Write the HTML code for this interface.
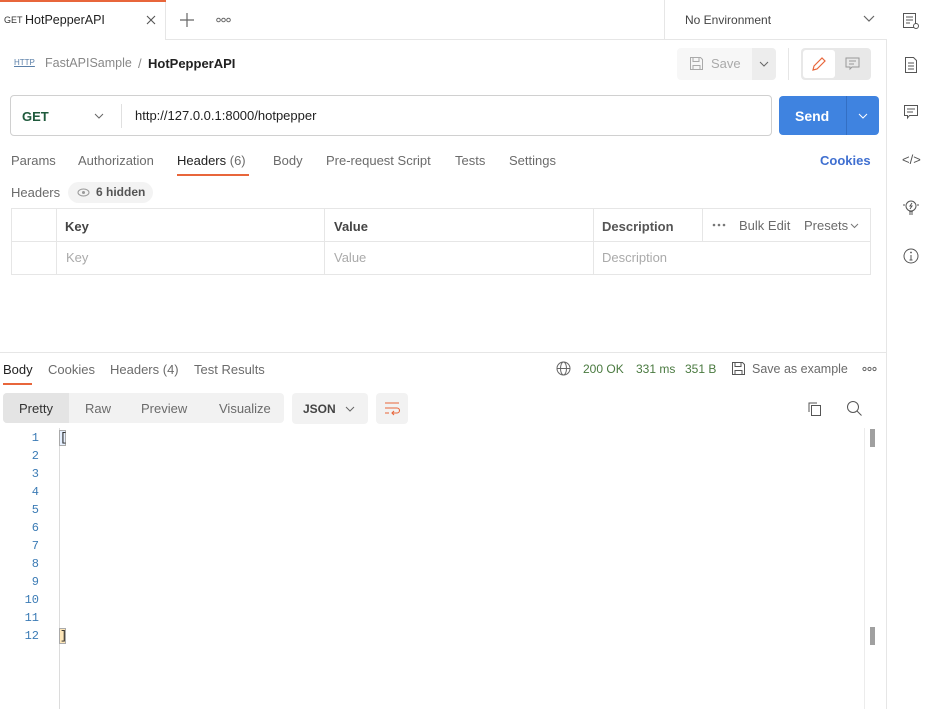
<!DOCTYPE html>
<html><head><meta charset="utf-8"><style>
*{box-sizing:border-box;margin:0;padding:0}
body{width:931px;height:709px;overflow:hidden;background:#fff;font-family:"Liberation Sans",sans-serif;font-size:13px;color:#212121;position:relative}
.a{position:absolute;white-space:nowrap}
.g{color:#6b6b6b}
svg{position:absolute}
</style></head><body>
<!-- top bar -->
<div class="a" style="left:0;top:39px;width:886px;height:1px;background:#e6e6e6"></div>
<div class="a" style="left:165px;top:0;width:1px;height:39px;background:#e6e6e6"></div>
<div class="a" style="left:0;top:0;width:165px;height:40px;background:#fff"></div>
<div class="a" style="left:0;top:0;width:166px;height:2px;background:#e8663b"></div>
<div class="a" style="left:4px;top:15px;font-size:9px;color:#333">GET</div>
<div class="a" style="left:25px;top:13px;font-size:12.5px">HotPepperAPI</div>
<svg style="left:146px;top:15px" width="10" height="10"><path d="M1 1l8 8M9 1l-8 8" stroke="#555" stroke-width="1.1"/></svg>
<svg style="left:180px;top:13px" width="14" height="14"><path d="M7 0v14M0 7h14" stroke="#666" stroke-width="1.2"/></svg>
<svg style="left:216px;top:17px" width="15" height="6"><circle cx="2.5" cy="3" r="1.8" fill="none" stroke="#666"/><circle cx="7.5" cy="3" r="1.8" fill="none" stroke="#666"/><circle cx="12.5" cy="3" r="1.8" fill="none" stroke="#666"/></svg>
<div class="a" style="left:664px;top:0;width:1px;height:39px;background:#e6e6e6"></div>
<div class="a" style="left:685px;top:13px;font-size:12px;color:#444">No Environment</div>
<svg style="left:863px;top:15px" width="12" height="8"><path d="M1 1l5 5 5-5" fill="none" stroke="#666" stroke-width="1.2"/></svg>
<!-- right sidebar -->
<div class="a" style="left:886px;top:39px;width:1px;height:670px;background:#e6e6e6"></div>
<svg style="left:902px;top:12px" width="18" height="18"><rect x="1.5" y="1.5" width="12" height="14" fill="none" stroke="#555"/><path d="M4 5h7M4 8h7M4 11h4" stroke="#555"/><circle cx="14" cy="14" r="2.5" fill="#fff" stroke="#555"/></svg>
<svg style="left:904px;top:56px" width="14" height="18"><path d="M1.5 1.5h8l3 3v12h-11z" fill="none" stroke="#555"/><path d="M4 7h6M4 10h6M4 13h6" stroke="#555"/></svg>
<svg style="left:903px;top:104px" width="16" height="16"><path d="M1.5 1.5h13v10h-8l-2 2.5v-2.5h-3z" fill="none" stroke="#555"/><path d="M4 5h8M4 8h6" stroke="#555"/></svg>
<div class="a" style="left:902px;top:152px;font-size:13px;color:#555">&lt;/&gt;</div>
<svg style="left:902px;top:199px" width="18" height="18"><circle cx="9" cy="7" r="5" fill="none" stroke="#555"/><path d="M7 13h4M7 15h4M10 4l-2 3h2l-2 3M1 6h2M15 6h2" stroke="#555" fill="none"/></svg>
<svg style="left:903px;top:248px" width="16" height="16"><circle cx="8" cy="8" r="7" fill="none" stroke="#555"/><path d="M8 7v5M6.5 12h3" stroke="#555"/><circle cx="8" cy="4.5" r="0.9" fill="#555"/></svg>
<!-- breadcrumb -->
<div class="a" style="left:14px;top:58px;font-size:8px;color:#5a7fa8;text-decoration:underline">HTTP</div>
<div class="a" style="left:45px;top:56px;font-size:12.5px;color:#888">FastAPISample</div>
<div class="a" style="left:138px;top:56px;font-size:13px;color:#888">/</div>
<div class="a" style="left:148px;top:56px;font-size:13px;font-weight:bold">HotPepperAPI</div>
<div class="a" style="left:677px;top:48px;width:98px;height:32px;background:#f7f7f7;border-radius:4px"></div>
<div class="a" style="left:752px;top:48px;width:24px;height:32px;background:#ededed;border-radius:0 4px 4px 0"></div>
<svg style="left:689px;top:56px" width="15" height="15"><path d="M1.5 1.5h10l2 2v10h-12z M4 1.5v4h6v-4 M4 13.5v-4h7v4" fill="none" stroke="#aaa"/></svg>
<div class="a" style="left:711px;top:56px;color:#aaa">Save</div>
<svg style="left:759px;top:61px" width="10" height="6"><path d="M1 1l4 4 4-4" fill="none" stroke="#666"/></svg>
<div class="a" style="left:788px;top:48px;width:1px;height:32px;background:#e6e6e6"></div>
<div class="a" style="left:801px;top:48px;width:70px;height:32px;background:#e8e8e8;border-radius:4px"></div>
<div class="a" style="left:803px;top:50px;width:32px;height:28px;background:#fff;border-radius:3px"></div>
<svg style="left:811px;top:56px" width="16" height="16"><path d="M2 14l1-4 8-8 3 3-8 8z" fill="none" stroke="#e8663b" stroke-width="1.2"/></svg>
<svg style="left:845px;top:57px" width="15" height="14"><path d="M1 1h13v9h-7l-2 2v-2h-4z" fill="none" stroke="#999"/><path d="M4 4h7M4 7h5" stroke="#999"/></svg>
<!-- URL bar -->
<div class="a" style="left:10px;top:95px;width:762px;height:41px;border:1px solid #d0d0d0;border-radius:4px"></div>
<div class="a" style="left:121px;top:104px;width:1px;height:24px;background:#e0e0e0"></div>
<div class="a" style="left:22px;top:109px;font-weight:bold;color:#1f5a3c;font-size:13px">GET</div>
<svg style="left:94px;top:113px" width="10" height="6"><path d="M1 1l4 4 4-4" fill="none" stroke="#666"/></svg>
<div class="a" style="left:135px;top:108px;font-size:13px">http://127.0.0.1:8000/hotpepper</div>
<div class="a" style="left:779px;top:96px;width:100px;height:39px;background:#3f83e0;border-radius:4px"></div>
<div class="a" style="left:846px;top:96px;width:1px;height:39px;background:#336fc4"></div>
<div class="a" style="left:795px;top:108px;font-size:14px;font-weight:bold;color:#fff">Send</div>
<svg style="left:858px;top:113px" width="10" height="6"><path d="M1 1l4 4 4-4" fill="none" stroke="#fff"/></svg>
<!-- request tabs -->
<div class="a g" style="left:11px;top:153px">Params</div>
<div class="a g" style="left:78px;top:153px">Authorization</div>
<div class="a" style="left:177px;top:153px">Headers <span class="g">(6)</span></div>
<div class="a" style="left:177px;top:174px;width:72px;height:2px;background:#e8663b"></div>
<div class="a g" style="left:273px;top:153px">Body</div>
<div class="a g" style="left:326px;top:153px">Pre-request Script</div>
<div class="a g" style="left:455px;top:153px">Tests</div>
<div class="a g" style="left:509px;top:153px">Settings</div>
<div class="a" style="left:820px;top:153px;color:#3f6fd0;font-weight:bold">Cookies</div>
<div class="a g" style="left:11px;top:185px">Headers</div>
<div class="a" style="left:68px;top:182px;width:85px;height:21px;background:#f3f3f3;border-radius:11px"></div>
<svg style="left:77px;top:188px" width="13" height="9"><ellipse cx="6.5" cy="4.5" rx="5.5" ry="3.5" fill="none" stroke="#999"/><circle cx="6.5" cy="4.5" r="1.5" fill="#999"/></svg>
<div class="a" style="left:96px;top:185px;font-size:12px;font-weight:bold;color:#555">6 hidden</div>
<!-- table -->
<div class="a" style="left:11px;top:208px;width:860px;height:67px;border:1px solid #e6e6e6"></div>
<div class="a" style="left:11px;top:241px;width:860px;height:1px;background:#e6e6e6"></div>
<div class="a" style="left:56px;top:208px;width:1px;height:67px;background:#e6e6e6"></div>
<div class="a" style="left:324px;top:208px;width:1px;height:67px;background:#e6e6e6"></div>
<div class="a" style="left:593px;top:208px;width:1px;height:67px;background:#e6e6e6"></div>
<div class="a" style="left:702px;top:208px;width:1px;height:34px;background:#e6e6e6"></div>
<div class="a" style="left:65px;top:219px;font-weight:bold;color:#444">Key</div>
<div class="a" style="left:334px;top:219px;font-weight:bold;color:#444">Value</div>
<div class="a" style="left:602px;top:219px;font-weight:bold;color:#555">Description</div>
<svg style="left:712px;top:223px" width="16" height="4"><circle cx="2" cy="2" r="1.3" fill="#777"/><circle cx="7" cy="2" r="1.3" fill="#777"/><circle cx="12" cy="2" r="1.3" fill="#777"/></svg>
<div class="a g" style="left:739px;top:218px">Bulk Edit</div>
<div class="a g" style="left:804px;top:218px">Presets</div>
<svg style="left:850px;top:223px" width="9" height="6"><path d="M1 1l3.5 3.5 3.5-3.5" fill="none" stroke="#777"/></svg>
<div class="a" style="left:66px;top:250px;color:#aaa">Key</div>
<div class="a" style="left:334px;top:250px;color:#aaa">Value</div>
<div class="a" style="left:602px;top:250px;color:#aaa">Description</div>
<!-- response -->
<div class="a" style="left:0;top:352px;width:886px;height:1px;background:#e6e6e6"></div>
<div class="a" style="left:3px;top:362px">Body</div>
<div class="a" style="left:3px;top:383px;width:29px;height:2px;background:#e8663b"></div>
<div class="a g" style="left:48px;top:362px">Cookies</div>
<div class="a g" style="left:110px;top:362px">Headers <span>(4)</span></div>
<div class="a g" style="left:194px;top:362px">Test Results</div>
<svg style="left:556px;top:361px" width="15" height="15"><circle cx="7.5" cy="7.5" r="6.5" fill="none" stroke="#666"/><ellipse cx="7.5" cy="7.5" rx="3" ry="6.5" fill="none" stroke="#666"/><path d="M1 7.5h13" stroke="#666"/></svg>
<div class="a" style="left:583px;top:362px;font-size:12px;color:#4a7a40">200 OK</div>
<div class="a" style="left:636px;top:362px;font-size:12px;color:#4a7a40">331 ms</div>
<div class="a" style="left:685px;top:362px;font-size:12px;color:#4a7a40">351 B</div>
<svg style="left:731px;top:361px" width="15" height="15"><path d="M1.5 1.5h10l2 2v10h-12z M4 1.5v4h6v-4 M4 13.5v-4h7v4" fill="none" stroke="#555"/></svg>
<div class="a g" style="left:752px;top:362px;font-size:12.5px">Save as example</div>
<svg style="left:862px;top:366px" width="15" height="6"><circle cx="2.5" cy="3" r="1.6" fill="none" stroke="#666"/><circle cx="7.5" cy="3" r="1.6" fill="none" stroke="#666"/><circle cx="12.5" cy="3" r="1.6" fill="none" stroke="#666"/></svg>
<div class="a" style="left:3px;top:393px;width:281px;height:30px;background:#f2f2f2;border-radius:4px"></div>
<div class="a" style="left:3px;top:393px;width:66px;height:30px;background:#e4e4e4;border-radius:4px 0 0 4px"></div>
<div class="a" style="left:19px;top:401px;color:#333">Pretty</div>
<div class="a g" style="left:85px;top:401px">Raw</div>
<div class="a g" style="left:141px;top:401px">Preview</div>
<div class="a g" style="left:219px;top:401px">Visualize</div>
<div class="a" style="left:292px;top:393px;width:76px;height:31px;background:#f2f2f2;border-radius:4px"></div>
<div class="a" style="left:303px;top:402px;font-size:12px;font-weight:bold;color:#444">JSON</div>
<svg style="left:345px;top:406px" width="10" height="6"><path d="M1 1l4 4 4-4" fill="none" stroke="#666"/></svg>
<div class="a" style="left:376px;top:393px;width:32px;height:31px;background:#f2f2f2;border-radius:4px"></div>
<svg style="left:384px;top:401px" width="17" height="15"><path d="M1 2h14M1 7h12a2.5 2.5 0 0 1 0 5h-5M1 12h4M10 10l-2 2 2 2" fill="none" stroke="#e8663b" stroke-width="1.1"/></svg>
<svg style="left:807px;top:401px" width="16" height="16"><rect x="4.5" y="4.5" width="9" height="10" fill="none" stroke="#555"/><path d="M2 11V2h8" fill="none" stroke="#555"/></svg>
<svg style="left:846px;top:400px" width="17" height="17"><circle cx="7" cy="7" r="5.5" fill="none" stroke="#555"/><path d="M11 11l4.5 4.5" stroke="#555"/></svg>
<!-- code -->
<div class="a" style="left:59px;top:428px;width:1px;height:281px;background:#dcdcdc"></div>
<div class="a" style="left:864px;top:428px;width:1px;height:281px;background:#ececec"></div>
<div class="a" style="left:870px;top:429px;width:5px;height:18px;background:#a0a0a0"></div>
<div class="a" style="left:870px;top:627px;width:5px;height:18px;background:#a0a0a0"></div>
<div class="a" style="left:0;top:429px;width:39px;font-family:'Liberation Mono',monospace;font-size:12px;line-height:18px;color:#3b7bb5;text-align:right;white-space:pre">1
2
3
4
5
6
7
8
9
10
11
12</div>
<div class="a" style="left:59px;top:430px;width:7px;height:16px;border:1px solid #aaa;font-family:'Liberation Mono',monospace;font-size:12px;line-height:14px;color:#222;background:#e6f0ff">[</div>
<div class="a" style="left:59px;top:628px;width:7px;height:16px;border:1px solid #aaa;font-family:'Liberation Mono',monospace;font-size:12px;line-height:14px;color:#222;background:#fde6b8">]</div>
</body></html>
